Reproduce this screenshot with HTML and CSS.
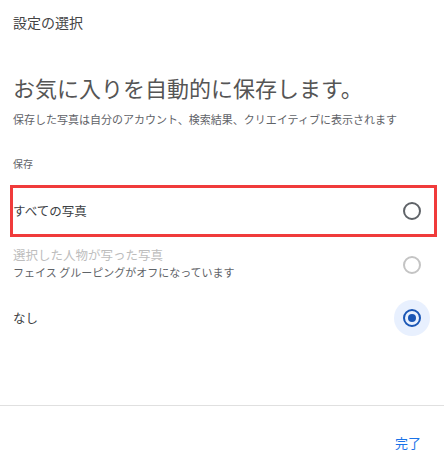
FILE: index.html
```html
<!DOCTYPE html>
<html lang="ja">
<head>
<meta charset="utf-8">
<title>設定の選択</title>
<link rel="stylesheet" href="styles.css">
</head>
<body>
<div class="dialog">
  <div class="dialog-title">設定の選択</div>
  <h1 class="heading">お気に入りを自動的に保存します。</h1>
  <p class="subtitle">保存した写真は自分のアカウント、検索結果、クリエイティブに表示されます</p>
  <div class="section-label">保存</div>
  <div class="options">
    <div class="option option-highlight h52">
      <div class="option-text"><span class="option-main">すべての写真</span></div>
      <span class="radio"><span class="ring"></span></span>
    </div>
    <div class="option h56">
      <div class="option-text two-line">
        <span class="option-main disabled">選択した人物が写った写真</span>
        <span class="option-sub">フェイス グルーピングがオフになっています</span>
      </div>
      <span class="radio"><span class="ring ring-disabled"></span></span>
    </div>
    <div class="option h50">
      <div class="option-text"><span class="option-main">なし</span></div>
      <span class="radio radio-selected"><span class="ring ring-selected"><span class="dot"></span></span></span>
    </div>
  </div>
  <div class="spacer"></div>
  <div class="footer">
    <button class="done">完了</button>
  </div>
</div>
</body>
</html>
```
FILE: styles.css
```css
html, body {
  margin: 0;
  padding: 0;
  background: #ffffff;
}
body {
  font-family: "Noto Sans CJK JP", "Noto Sans", sans-serif;
  color: #3c4043;
}
.dialog {
  width: 444px;
  height: 463px;
  display: flex;
  flex-direction: column;
}
.dialog-title {
  margin: 12px 0 0 13px;
  font-size: 14px;
  line-height: 20px;
  color: #444;
}
.heading {
  margin: 41px 0 0 13px;
  font-size: 22px;
  line-height: 28px;
  font-weight: 400;
  color: #555;
}
.subtitle {
  margin: 10px 0 0 13px;
  font-size: 11px;
  line-height: 16px;
  color: #5f6368;
}
.section-label {
  margin: 30px 0 0 13px;
  font-size: 10px;
  line-height: 14px;
  color: #5f6368;
}
.options {
  margin-top: 14px;
  padding: 0 7px 0 10px;
  display: flex;
  flex-direction: column;
}
.option {
  display: flex;
  align-items: center;
  justify-content: space-between;
  border: 3px solid transparent;
  padding-right: 4px;
  box-sizing: border-box;
}
.h52 { height: 52px; }
.h56 { height: 56px; }
.h50 { height: 50px; }
.option-highlight {
  border-color: #f03b3b;
}
.option-text {
  display: flex;
  flex-direction: column;
}
.option-text.two-line {
  margin-bottom: 4px;
}
.option-main {
  font-size: 12.5px;
  line-height: 18px;
  color: #3c4043;
}
.option-main.disabled {
  color: #bdbdbd;
}
.option-sub {
  font-size: 11px;
  line-height: 16px;
  color: #5f6368;
}
.radio {
  width: 36px;
  height: 36px;
  border-radius: 50%;
  display: flex;
  align-items: center;
  justify-content: center;
}
.radio-selected {
  background: #e8f0fe;
}
.ring {
  width: 18px;
  height: 18px;
  box-sizing: border-box;
  border: 2px solid #5f6368;
  border-radius: 50%;
  display: flex;
  align-items: center;
  justify-content: center;
}
.ring-disabled {
  border-color: #c4c4c4;
}
.ring-selected {
  border-color: #1a56b5;
}
.dot {
  width: 8px;
  height: 8px;
  border-radius: 50%;
  background: #1a56b5;
}
.spacer {
  height: 62px;
  border-bottom: 1px solid #e0e0e0;
}
.footer {
  display: flex;
  justify-content: flex-end;
  padding: 27px 15px 0 0;
}
.done {
  border: none;
  background: none;
  padding: 0 8px;
  font-family: inherit;
  font-size: 13px;
  line-height: 20px;
  color: #1a73e8;
}
```
